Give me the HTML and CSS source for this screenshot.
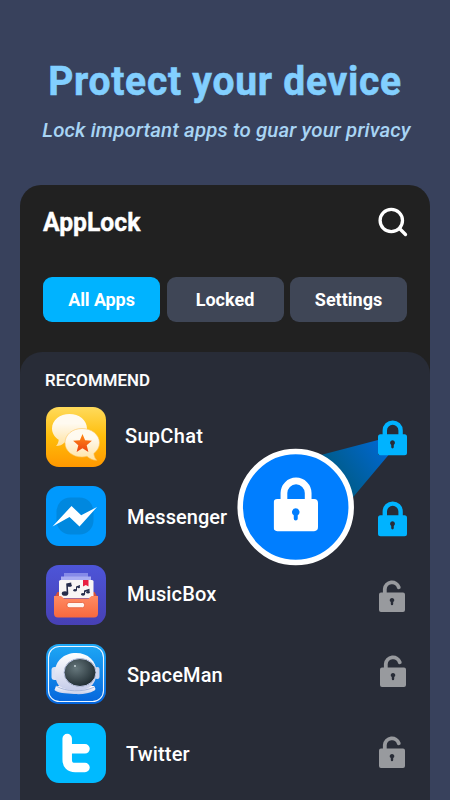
FILE: index.html
```html
<!DOCTYPE html>
<html lang="en">

<head>
    <meta charset="utf-8" />
    <meta name="viewport" content="width=device-width, initial-scale=1.0" />
    <title>AppLock</title>
    <link rel="stylesheet" href="styles.css">
</head>

<body>
    <!-- Shapes shared by the rows -->
    <svg class="symbols" width="0" height="0">
        <symbol id="lock" viewBox="0 0 29 36">
            <path d="M6.800 16V10.500a7.900 7.900 0 0 1 15.800 0V16" fill="none" stroke="currentColor" stroke-width="4.400" />
            <path fill="currentColor" fill-rule="evenodd" d="M2.500 14.300h24a2.500 2.500 0 0 1 2.500 2.500v16a2.500 2.500 0 0 1-2.500 2.500h-24a2.500 2.500 0 0 1-2.500-2.500v-16a2.500 2.500 0 0 1 2.500-2.500zM14.500 20.300a2.500 2.500 0 0 0-1.300 4.600v2.200a1.300 1.300 0 0 0 2.600 0v-2.200a2.500 2.500 0 0 0-1.300-4.600z" />
        </symbol>
        <symbol id="unlock" viewBox="0 0 26 32">
            <path d="M5.800 14V9a7.200 7.200 0 0 1 14-1.700" fill="none" stroke="currentColor" stroke-width="3.800" stroke-linecap="round" />
            <path fill="currentColor" fill-rule="evenodd" d="M2 12.500h22a2 2 0 0 1 2 2v15.500a2 2 0 0 1-2 2h-22a2 2 0 0 1-2-2v-15.500a2 2 0 0 1 2-2zM13 18a2.200 2.200 0 0 0-1.200 4.100v2a1.200 1.200 0 0 0 2.400 0v-2a2.200 2.200 0 0 0-1.200-4.100z" />
        </symbol>
    </svg>

    <header class="intro">
        <h1>Protect your device</h1>
        <p>Lock important apps to guar your privacy</p>
    </header>

    <main class="phone">
        <div class="topbar">
            <h2>AppLock</h2>
            <svg class="search" viewBox="0 0 30 30">
                <circle cx="13.300" cy="13.500" r="11.200" />
                <path d="M21.500 21.500l6 6" />
            </svg>
        </div>

        <nav class="tabs">
            <button class="tab active">All Apps</button>
            <button class="tab">Locked</button>
            <button class="tab">Settings</button>
        </nav>

        <section class="list">
            <h3>RECOMMEND</h3>

            <div class="row supchat">
                <svg class="icon" viewBox="0 0 60 60">
                    <defs>
                        <linearGradient id="gold" x2="0" y2="1">
                            <stop offset="0" stop-color="#ffdb5c" />
                            <stop offset=".5" stop-color="#ffbd0a" />
                            <stop offset="1" stop-color="#ff9800" />
                        </linearGradient>
                        <linearGradient id="cream" x2="0" y2="1">
                            <stop offset="0.300" stop-color="#fffaf0" />
                            <stop offset="1" stop-color="#ffe2a0" />
                        </linearGradient>
                        <linearGradient id="star" x2="0" y2="1">
                            <stop offset="0" stop-color="#ff8a16" />
                            <stop offset="1" stop-color="#ec4310" />
                        </linearGradient>
                    </defs>
                    <rect width="60" height="60" rx="13" fill="url(#gold)" />
                    <path fill="url(#cream)" d="M23.500 7C33 7 41 13 41 21.500S33 36 23.500 36c-2 0-3.500-.2-5-.6-2 2.200-5 3.600-8.500 3.600 1.500-1.500 2.600-3.800 2.700-6.200C8.500 30 6 26 6 21.500 6 13 14 7 23.500 7z" />
                    <path fill="url(#cream)" stroke="#fdc45c" stroke-width=".6" d="M36 21.500c9.500 0 17.500 6 17.500 14.300 0 4.500-2.300 8-5.700 10.700.2 2.500 1.200 5 3 6.800-4 0-7.500-1.800-9.800-4-1.600.4-3.300.7-5 .7-9.500 0-17-6-17-14.200S26.500 21.500 36 21.500z" />
                    <path fill="url(#star)" d="M36.500 27l2.600 6.300 6.800.5-5.200 4.400 1.700 6.800-5.900-3.700-5.900 3.700 1.700-6.800-5.200-4.400 6.800-.5z" />
                </svg>
                <span class="name">SupChat</span>
                <svg class="lock"><use href="#lock" /></svg>

                <!-- Magnified lock with the beam pointing at the small one -->
                <svg class="magnifier" viewBox="0 0 170 152">
                    <defs>
                        <linearGradient id="beam" gradientUnits="userSpaceOnUse" x1="100" y1="62" x2="144" y2="30">
                            <stop offset="0" stop-color="#005c8a" />
                            <stop offset="1" stop-color="#0066cc" />
                        </linearGradient>
                    </defs>
                    <path fill="url(#beam)" d="M80 40L141 24v15h10.500L112 86z" />
                    <circle cx="58.700" cy="91" r="55.500" fill="#007eff" stroke="#fff" stroke-width="5.500" />
                    <svg class="big-lock" x="36.500" y="61" width="44.500" height="55.200"><use href="#lock" /></svg>
                </svg>
            </div>

            <div class="row messenger">
                <svg class="icon" viewBox="0 0 60 60">
                    <rect width="60" height="60" rx="13" fill="#0099fd" />
                    <rect x="10.500" y="11.500" width="37" height="37" rx="14" fill="#0088df" />
                    <path fill="#fff" d="M6.500 40.500L25.500 20l9.700 9.300L51 21 33.500 40.500 23.500 31z" />
                </svg>
                <span class="name">Messenger</span>
                <svg class="lock"><use href="#lock" /></svg>
            </div>

            <div class="row music">
                <svg class="icon" viewBox="0 0 60 60">
                    <defs>
                        <linearGradient id="violet" x2="0" y2="1">
                            <stop offset="0" stop-color="#4d55d8" />
                            <stop offset="1" stop-color="#4740b4" />
                        </linearGradient>
                        <linearGradient id="box" x2="0" y2="1">
                            <stop offset="0" stop-color="#ff8b62" />
                            <stop offset="1" stop-color="#f7683e" />
                        </linearGradient>
                    </defs>
                    <rect width="60" height="60" rx="13" fill="url(#violet)" />
                    <path fill="#858ae8" d="M18 8h24v8H18z" />
                    <path fill="#a9adf2" d="M15 11.500h30V18H15z" />
                    <path fill="#d85238" d="M11.500 27h37l3.500 6H8z" />
                    <path fill="#f8f5f4" d="M13 16.500q0-1.500 1.500-1.500h31.500q1.500 0 1.500 1.500V33h-34.500z" />
                    <path fill="#e91e40" d="M37 15h5.500v6.500l-2.700-1.500-2.800 1.500z" />
                    <!-- Notes on the sheet -->
                    <g fill="#252c4a">
                        <ellipse cx="19" cy="28.500" rx="3.200" ry="2.300" />
                        <path d="M20.200 18.500l5-1 .2 3.500-3.500.8.400 6.700h-1.600z" />
                        <ellipse cx="24" cy="20.500" rx="1.800" ry="1.300" />
                        <ellipse cx="29" cy="25.300" rx="1.700" ry="1.200" />
                        <path d="M30 21.500l4-1.500v1.500l-3 1.200v2.500h-1z" />
                        <ellipse cx="32.800" cy="22.300" rx="1.200" ry="1" />
                        <ellipse cx="37" cy="29.300" rx="2" ry="1.400" />
                        <path d="M38 25.500l5.500-1.800v3l-1 .3v-1.300l-3.400 1.200V29H38z" />
                        <ellipse cx="42" cy="27.300" rx="1.700" ry="1.200" />
                    </g>
                    <path fill="url(#box)" d="M8 31h7l3 2.500h24.500l3-2.500H52v17.500q0 4-4 4H12q-4 0-4-4z" />
                    <rect x="21" y="37.500" width="17.500" height="5.200" rx="2" fill="#fff5ef" stroke="#e55d38" stroke-width=".8" />
                </svg>
                <span class="name">MusicBox</span>
                <svg class="lock open"><use href="#unlock" /></svg>
            </div>

            <div class="row space">
                <svg class="icon" viewBox="0 0 60 60">
                    <defs>
                        <linearGradient id="sky" x2="0" y2="1">
                            <stop offset="0" stop-color="#1ea8f5" />
                            <stop offset="1" stop-color="#0565dc" />
                        </linearGradient>
                        <linearGradient id="shell" x2="0" y2="1">
                            <stop offset="0" stop-color="#ffffff" />
                            <stop offset="1" stop-color="#c5cce9" />
                        </linearGradient>
                        <radialGradient id="visor" cx=".38" cy=".35" r=".7">
                            <stop offset="0" stop-color="#66777c" />
                            <stop offset="1" stop-color="#1d292f" />
                        </radialGradient>
                    </defs>
                    <rect width="60" height="60" rx="13" fill="url(#sky)" />
                    <rect x="2.500" y="2.500" width="55" height="55" rx="11" fill="none" stroke="#eaf5ff" stroke-width="1.100" />
                    <rect x="5.500" y="23" width="7" height="13" rx="3" fill="#dce2f4" />
                    <rect x="49" y="23" width="4.500" height="12" rx="2" fill="#ccd4ed" />
                    <path fill="url(#shell)" d="M10 42h38q2.500 3 .5 4.500C43 50 35 50.500 28 50c-8-.5-17-1-19.500-4z" />
                    <path fill="url(#shell)" d="M30 9c12 0 20.500 8 20.500 19 0 7-2.500 12-6.500 15-7 5-23 4.500-31-1-3-4-4-9-4-14 0-11 9-19 21-19z" />
                    <path fill="none" stroke="#a9b6da" d="M10 42c10 6 27 6.500 38.500 1" />
                    <ellipse cx="34" cy="28.500" rx="16" ry="14" fill="url(#visor)" stroke="#b9c3e2" />
                    <circle cx="29" cy="22" r="1" fill="#c7d3d8" />
                </svg>
                <span class="name">SpaceMan</span>
                <svg class="lock open"><use href="#unlock" /></svg>
            </div>

            <div class="row twitter">
                <svg class="icon" viewBox="0 0 60 60">
                    <rect width="60" height="60" rx="13" fill="#00baff" />
                    <path fill="none" stroke="#fff" stroke-width="9.500" stroke-linecap="round" stroke-linejoin="round" d="M21.200 15.500v21q0 8 8 8H39M22 25.800h17" />
                </svg>
                <span class="name">Twitter</span>
                <svg class="lock open"><use href="#unlock" /></svg>
            </div>
        </section>
    </main>
</body>

</html>
```

FILE: styles.css
```css
* {
    box-sizing: border-box;
}

body {
    margin: 0;
    height: 800px;
    overflow: hidden;
    display: flex;
    flex-direction: column;
    background: #38415c;
    color: #fff;
    font-family: Roboto, sans-serif;
}

h1,
h2,
h3,
p {
    margin: 0;
    white-space: nowrap;
}

.symbols {
    position: absolute;
}

.intro {
    height: 184.500px;
    flex: none;
    padding-top: 57px;
    text-align: center;
}

.intro h1 {
    color: #82cfff;
    font-size: 41px;
    line-height: 48px;
    letter-spacing: 0.800px;
    transform: scaleX(0.95);
    -webkit-text-stroke: 0.600px #82cfff;
}

.intro p {
    margin-top: 13px;
    padding-left: 3px;
    color: #a8d4f4;
    font-size: 20.500px;
    font-style: italic;
    font-weight: 500;
    line-height: 24px;
    letter-spacing: 0.100px;
}

.phone {
    flex: 1;
    margin: 0 20px;
    display: flex;
    flex-direction: column;
    background: #212121;
    border-radius: 21px 21px 0 0;
}

.topbar {
    height: 92.500px;
    padding: 22px 22px 0 23px;
    display: flex;
    justify-content: space-between;
}

.topbar h2 {
    font-size: 26px;
    line-height: 31px;
    transform: scaleX(0.95);
    transform-origin: left;
    -webkit-text-stroke: 0.400px #fff;
}

.search {
    width: 30px;
    height: 30px;
    fill: none;
    stroke: #fff;
    stroke-width: 3.300;
    stroke-linecap: round;
}

.tabs {
    display: grid;
    grid-template-columns: repeat(3, 1fr);
    gap: 6.500px;
    padding: 0 23px;
    height: 75px;
    align-items: start;
}

.tab {
    height: 45px;
    padding: 0;
    border: none;
    border-radius: 9px;
    background: #3f4656;
    color: #fff;
    font: bold 18px Roboto, sans-serif;
}

.tab.active {
    background: #00b3ff;
    letter-spacing: -0.100px;
}

.list {
    flex: 1;
    padding: 18px 23px 0 26px;
    background: #282c37;
    border-radius: 22px 22px 0 0;
}

.list h3 {
    height: 27px;
    margin-left: -1px;
    font-size: 16.800px;
    font-weight: 500;
    line-height: 21px;
    letter-spacing: 0.100px;
    -webkit-text-stroke: 0.150px #fff;
}

.row {
    position: relative;
    height: 79.200px;
    display: flex;
    align-items: center;
}

.icon {
    width: 60px;
    height: 60px;
}

.name {
    flex: 1;
    margin-left: 21px;
    padding-top: 1px;
    font-size: 20px;
    font-weight: 500;
    letter-spacing: 0.150px;
}

.supchat .name {
    margin-left: 19px;
    padding-top: 0;
    padding-bottom: 2px;
    letter-spacing: 0.300px;
}

.messenger .name {
    padding-top: 2px;
    letter-spacing: 0.050px;
}

.music .name {
    padding-top: 0;
    padding-bottom: 2px;
}

.twitter .name {
    margin-left: 20px;
}

.lock {
    position: relative;
    z-index: 2;
    width: 29px;
    height: 36px;
    margin-top: 6px;
    color: #00b3ff;
}

.supchat .lock {
    margin-top: 2px;
}

.lock.open {
    width: 26px;
    height: 32px;
    margin: 2px 2px 0 0;
    color: #989a9e;
}

.space .lock.open {
    margin: 0 1px 6px 0;
}

.twitter .lock.open {
    margin: 0 2px 2px 0;
}

.magnifier {
    position: absolute;
    left: 190.500px;
    top: 19px;
    width: 170px;
    height: 152px;
    z-index: 1;
}

.big-lock {
    color: #fff;
}
```
